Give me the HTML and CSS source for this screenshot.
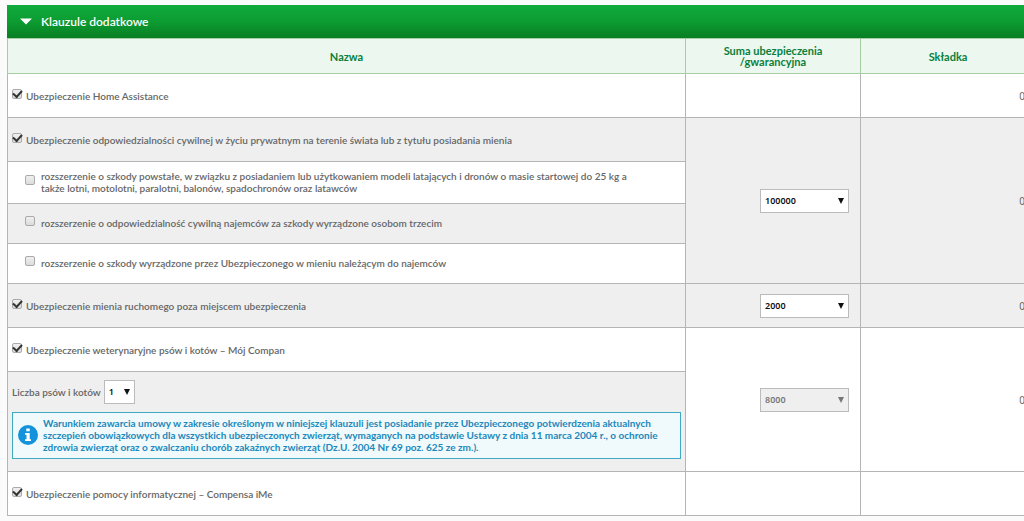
FILE: index.html
```html
<!DOCTYPE html>
<html lang="pl">
<head>
<meta charset="utf-8">
<title>Klauzule dodatkowe</title>
<link rel="stylesheet" href="styles.css">
</head>
<body>
<main class="panel">
  <h2 class="panel-title">
    <button type="button" class="panel-toggle" aria-expanded="true">
      <svg class="toggle-icon" viewBox="0 0 12 7" aria-hidden="true"><path d="M0 0.5H12L6 6.5Z" fill="#fff"/></svg>
      Klauzule dodatkowe
    </button>
  </h2>
  <table class="clauses">
    <colgroup><col><col class="col-side"><col class="col-side"></colgroup>
    <thead>
      <tr><th scope="col">Nazwa</th><th scope="col">Suma ubezpieczenia<br>/gwarancyjna</th><th scope="col">Składka</th></tr>
    </thead>
    <tbody>
      <tr class="main-row">
        <td><label class="option"><input type="checkbox" class="tick" checked><span>Ubezpieczenie Home Assistance</span></label></td>
        <td></td>
        <td class="premium">0</td>
      </tr>
      <tr class="main-row shaded">
        <td><label class="option"><input type="checkbox" class="tick" checked><span>Ubezpieczenie odpowiedzialności cywilnej w życiu prywatnym na terenie świata lub z tytułu posiadania mienia</span></label></td>
        <td rowspan="4" class="sum"><span class="picker"><select class="amount" aria-label="Suma gwarancyjna"><option>100000</option></select><svg class="arrow" viewBox="0 0 6 6" aria-hidden="true"><path d="M0 0H6L3 6Z"/></svg></span></td>
        <td rowspan="4" class="premium">0</td>
      </tr>
      <tr class="tall-row">
        <td><label class="option nested"><input type="checkbox" class="tick"><span>rozszerzenie o szkody powstałe, w związku z posiadaniem lub użytkowaniem modeli latających i dronów o masie startowej do 25 kg a także lotni, motolotni, paralotni, balonów, spadochronów oraz latawców</span></label></td>
      </tr>
      <tr class="sub-row shaded">
        <td><label class="option nested"><input type="checkbox" class="tick"><span>rozszerzenie o odpowiedzialność cywilną najemców za szkody wyrządzone osobom trzecim</span></label></td>
      </tr>
      <tr class="sub-row">
        <td><label class="option nested"><input type="checkbox" class="tick"><span>rozszerzenie o szkody wyrządzone przez Ubezpieczonego w mieniu należącym do najemców</span></label></td>
      </tr>
      <tr class="main-row shaded">
        <td><label class="option"><input type="checkbox" class="tick" checked><span>Ubezpieczenie mienia ruchomego poza miejscem ubezpieczenia</span></label></td>
        <td class="sum"><span class="picker"><select class="amount" aria-label="Suma ubezpieczenia mienia ruchomego"><option>2000</option></select><svg class="arrow" viewBox="0 0 6 6" aria-hidden="true"><path d="M0 0H6L3 6Z"/></svg></span></td>
        <td class="premium">0</td>
      </tr>
      <tr class="main-row">
        <td><label class="option"><input type="checkbox" class="tick" checked><span>Ubezpieczenie weterynaryjne psów i kotów – Mój Compan</span></label></td>
        <td rowspan="2" class="sum"><span class="picker"><select class="amount" aria-label="Suma ubezpieczenia weterynaryjnego" disabled><option>8000</option></select><svg class="arrow muted" viewBox="0 0 6 6" aria-hidden="true"><path d="M0 0H6L3 6Z"/></svg></span></td>
        <td rowspan="2" class="premium">0</td>
      </tr>
      <tr class="shaded">
        <td class="details">
          <div class="count">
            <label for="pets">Liczba psów i kotów</label>
            <span class="picker"><select id="pets" class="amount small"><option>1</option></select><svg class="arrow" viewBox="0 0 6 6" aria-hidden="true"><path d="M0 0H6L3 6Z"/></svg></span>
          </div>
          <div class="notice">
            <svg class="info" viewBox="0 0 20 20" aria-hidden="true"><circle cx="10" cy="10" r="10" fill="#1393dc"/><path d="M8.3 3.5h3.4v2.8H8.3zM7 8h4.7v6.2H13V16H7v-1.8h1.5V9.8H7z" fill="#fff"/></svg>
            <p>Warunkiem zawarcia umowy w zakresie określonym w niniejszej klauzuli jest posiadanie przez Ubezpieczonego potwierdzenia aktualnych szczepień obowiązkowych dla wszystkich ubezpieczonych zwierząt, wymaganych na podstawie Ustawy z dnia 11 marca 2004 r., o ochronie zdrowia zwierząt oraz o zwalczaniu chorób zakaźnych zwierząt (Dz.U. 2004 Nr 69 poz. 625 ze zm.).</p>
          </div>
        </td>
      </tr>
      <tr class="main-row">
        <td><label class="option"><input type="checkbox" class="tick" checked><span>Ubezpieczenie pomocy informatycznej – Compensa iMe</span></label></td>
        <td></td>
        <td></td>
      </tr>
    </tbody>
  </table>
</main>
</body>
</html>
```
FILE: styles.css
```css
* { box-sizing: border-box; }
body {
  margin: 0;
  padding: 5px 0 5px 7px;
  overflow-x: hidden;
  background: #fbfbfb;
  color: #666;
  font: 600 10px/12px Lato, "Noto Sans", sans-serif;
}
/* The panel runs past the right edge of the viewport. */
.panel { margin-right: -12px; }
.panel-title {
  margin: 0;
  background: linear-gradient(#10ab3c, #0c9c31 50%, #087e24);
}
.panel-toggle {
  display: flex;
  align-items: center;
  gap: 9px;
  width: 100%;
  height: 33px;
  padding: 0 13px;
  border: 0;
  background: none;
  color: #fff;
  font: 600 12px/16px Lato, "Noto Sans", sans-serif;
}
.toggle-icon { width: 12px; height: 7px; }
.clauses {
  width: 100%;
  border-collapse: collapse;
  table-layout: fixed;
  background: #fff;
}
.col-side { width: 175px; }
th, td { padding: 0 4px; border: 1px solid #b5b5b5; text-align: left; }
th {
  height: 35px;
  border-color: #a5cfa0;
  background: #ecf7ef;
  color: #08803c;
  font-size: 11px;
  font-weight: 700;
  line-height: 11px;
  text-align: center;
}
.main-row { height: 44px; }
.tall-row { height: 42px; }
.sub-row { height: 40px; }
.shaded td { background: #efefef; }
.option { display: flex; align-items: center; gap: 4px; }
.nested { padding: 0 30px 2px 13px; gap: 6px; }
.tick {
  display: grid;
  place-items: center;
  flex: none;
  appearance: none;
  width: 10px;
  height: 10px;
  margin: 0 0 4px;
  border: 1px solid #aaa;
  border-radius: 2px;
  background: linear-gradient(#f0f0f0, #dcdcdc);
}
.tick:checked::before {
  content: "";
  width: 7px;
  height: 4px;
  margin-bottom: 2px;
  border: solid #333;
  border-width: 0 0 2px 2px;
  transform: rotate(-48deg);
}
.sum { padding-right: 11px; text-align: right; }
.premium {
  padding-right: 10px;
  font-family: "Noto Sans", sans-serif;
  font-weight: 400;
  text-align: right;
}
.picker { display: inline-grid; align-items: center; vertical-align: middle; }
.picker > * { grid-area: 1 / 1; }
.amount {
  appearance: none;
  width: 89px;
  height: 24px;
  padding: 0 4px;
  border: 1px solid #bbb;
  border-radius: 0;
  background: #fff;
  color: #111;
  font: 600 9px/14px "Noto Sans", sans-serif;
}
.amount:disabled { background: #efefef; color: #777; opacity: 1; }
.small { width: 31px; }
.arrow {
  justify-self: end;
  width: 6px;
  height: 6px;
  margin-right: 5px;
  fill: #111;
  pointer-events: none;
}
.muted { fill: #777; }
.details { padding: 8px 4px 12px; }
.count { display: flex; align-items: center; gap: 3px; margin-bottom: 8px; }
.notice {
  display: flex;
  align-items: center;
  gap: 5px;
  padding: 4px 5px 5px;
  border: 1px solid #3fa9c4;
  background: #f0fafc;
  color: #2288bb;
  font-weight: 700;
}
.info { flex: none; width: 20px; height: 20px; }
.notice p { margin: 0; }
```
